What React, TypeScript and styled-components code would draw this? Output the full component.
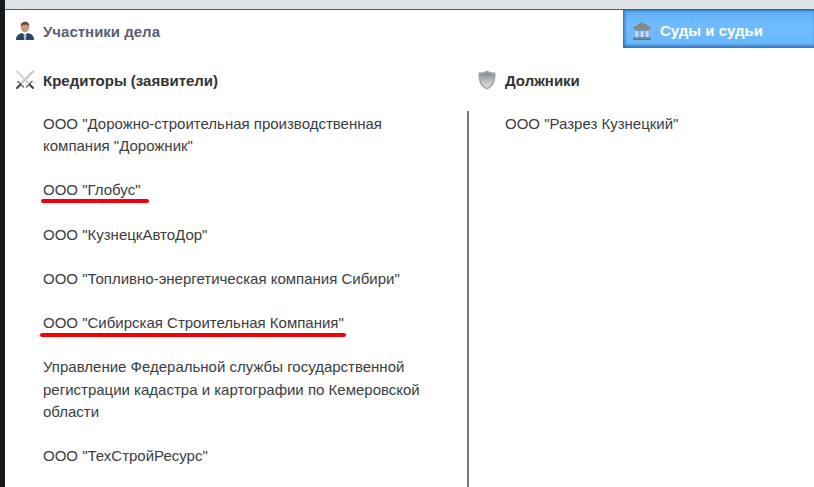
import styled, { createGlobalStyle } from "styled-components";

const GlobalStyle = createGlobalStyle`
  html, body {
    margin: 0;
    padding: 0;
    height: 100%;
    overflow: hidden;
    background: #fff;
  }
  #root {
    height: 100%;
  }
`;

const Page = styled.div`
  display: flex;
  height: 487px;
  font-family: "Liberation Sans", Arial, sans-serif;
  font-size: 15px;
  color: #3a3d42;
`;

const Stripe = styled.div`
  width: 5px;
  flex: none;
  background: #14191d;
`;

const Main = styled.div`
  flex: 1;
  min-width: 0;
  overflow: hidden;
`;

const TopBar = styled.div`
  height: 9px;
  background: #dfe2e4;
  border-bottom: 1px solid #55585d;
`;

const TabRow = styled.div`
  display: flex;
  justify-content: space-between;
  height: 38px;
`;

const SectionTitle = styled.div`
  display: flex;
  align-items: center;
  gap: 8px;
  padding: 4px 0 0 10px;
  height: 34px;
  font-weight: bold;
  color: #5a6072;
`;

const CourtTab = styled.div`
  display: flex;
  align-items: center;
  gap: 8px;
  width: 191px;
  padding: 3px 0 0 9px;
  box-sizing: border-box;
  font-weight: bold;
  color: #fff;
  background: linear-gradient(#62aef5, #6fbcff 40%, #68b6fb);
  box-shadow: inset 2px 1px 3px rgba(30, 90, 160, 0.65), inset 0 -3px 2px rgba(30, 90, 160, 0.55);
`;

const Columns = styled.div`
  display: flex;
  padding-top: 17px;
`;

const Column = styled.section<{ $width: number }>`
  width: ${(p) => p.$width}px;
  flex: none;
`;

const ColumnTitle = styled.h3<{ $indent?: number }>`
  display: flex;
  align-items: center;
  gap: 8px;
  height: 30px;
  margin: 0;
  padding-left: ${(p) => p.$indent ?? 0}px;
  font-size: 15px;
  font-weight: bold;
  color: #333;
`;

const Creditors = styled(Column)`
  padding-left: 10px;
  box-sizing: border-box;
`;

const List = styled.div<{ $divider?: boolean }>`
  margin-top: 16px;
  padding: 2px 0 0 ${(p) => (p.$divider ? "36px" : "28px")};
  height: 376px;
  box-sizing: border-box;
  ${(p) => (p.$divider ? "border-left: 2px solid #777a80;" : "")}
`;

const Item = styled.p<{ $width?: number }>`
  position: relative;
  margin: 0 0 22.14px;
  width: ${(p) => (p.$width ? `${p.$width}px` : "auto")};
  line-height: 22.14px;
`;

const RedMark = styled.span<{ $width: number; $drop: number; $left: number }>`
  position: absolute;
  left: ${(p) => p.$left}px;
  bottom: ${(p) => -p.$drop}px;
  width: ${(p) => p.$width}px;
  height: 4px;
  background: #f4000a;
  border-radius: 2px;
`;

const PersonIcon = () => (
  <svg width="20" height="20" viewBox="0 0 20 20">
    <path d="M1 19c0-4 2-6 6-7l3 2 3-2c4 1 6 3 6 7z" fill="#2d4463" />
    <path d="M8.600 13.500h2.800l-.6 5.500H9.200z" fill="#a8c4da" />
    <ellipse cx="10" cy="6.500" rx="4" ry="5" fill="#c9977a" />
    <path d="M5.800 6.500C5.300 2.200 7.500.8 10 .8s4.700 1.400 4.200 5.700c-.6-1.800-1.500-2.800-2.700-3-1.500.6-3 .5-4 .2-.9.800-1.300 1.600-1.700 2.800z" fill="#6a4332" />
  </svg>
);

const SwordsIcon = () => (
  <svg width="20" height="20" viewBox="0 0 20 20" fill="none" strokeLinecap="round">
    <path d="M18 1.500 5.500 14" stroke="#c0c2c4" strokeWidth="2" />
    <path d="M2 1.500 14.500 14" stroke="#cfd1d3" strokeWidth="2" />
    <path d="M3 11.500l5.500 5.500M17 11.500 11.500 17" stroke="#6a6d70" strokeWidth="1.500" />
    <path d="M5 15l-3 3M15 15l3 3" stroke="#3e4145" strokeWidth="2" />
  </svg>
);

const ShieldIcon = () => (
  <svg width="20" height="20" viewBox="0 0 20 20">
    <defs>
      <linearGradient id="shieldFill" x1="0" y1="0" x2="0" y2="1">
        <stop offset="0" stopColor="#85888b" />
        <stop offset="1" stopColor="#e4e5e6" />
      </linearGradient>
    </defs>
    <path d="M10 .5c2.500 1.500 5 2 8.500 2 .4 8-1.500 14-8.500 17C3 16.500 1.100 10.500 1.500 2.500 5 2.500 7.500 2 10 .5z" fill="#a2a5a8" />
    <path d="M10 2.500c2 1 4 1.700 6.800 1.800.2 6.200-1.300 11-6.800 13.500C4.500 15.300 3 10.500 3.200 4.300 6 4.200 8 3.500 10 2.500z" fill="url(#shieldFill)" />
  </svg>
);

const BankIcon = () => (
  <svg width="20" height="20" viewBox="0 0 20 20">
    <path d="M10 1 19 6.500v1.500H1V6.500z" fill="#85888b" />
    <path d="M3 8.500h14v1H3z" fill="#6f7376" />
    <path d="M3.500 10h2.500v6H3.500zM8.800 10h2.400v6H8.800zM14 10h2.500v6H14z" fill="#d9dbdc" />
    <path d="M2 16h16v1.500H2z" fill="#85888b" />
    <path d="M1 17.500h18V19H1z" fill="#6f7376" />
  </svg>
);

const App = () => {
  return (
    <Page>
      <GlobalStyle />
      <Stripe />
      <Main>
        <TopBar />
        <TabRow>
          <SectionTitle>
            <PersonIcon />
            Участники дела
          </SectionTitle>
          <CourtTab>
            <BankIcon />
            Суды и судьи
          </CourtTab>
        </TabRow>
        <Columns>
          <Creditors $width={462}>
            <ColumnTitle>
              <SwordsIcon />
              Кредиторы (заявители)
            </ColumnTitle>
            <List>
              <Item $width={385}>ООО "Дорожно-строительная производственная компания "Дорожник"</Item>
              <Item>
                ООО "Глобус"
                <RedMark $left={-2} $width={108} $drop={1} />
              </Item>
              <Item>ООО "КузнецкАвтоДор"</Item>
              <Item>ООО "Топливно-энергетическая компания Сибири"</Item>
              <Item>
                ООО "Сибирская Строительная Компания"
                <RedMark $left={-3} $width={306} $drop={3} />
              </Item>
              <Item $width={385}>Управление Федеральной службы государственной регистрации кадастра и картографии по Кемеровской области</Item>
              <Item>ООО "ТехСтройРесурс"</Item>
            </List>
          </Creditors>
          <Column $width={347}>
            <ColumnTitle $indent={10}>
              <ShieldIcon />
              Должники
            </ColumnTitle>
            <List $divider>
              <Item>ООО "Разрез Кузнецкий"</Item>
            </List>
          </Column>
        </Columns>
      </Main>
    </Page>
  );
};

export default App;
